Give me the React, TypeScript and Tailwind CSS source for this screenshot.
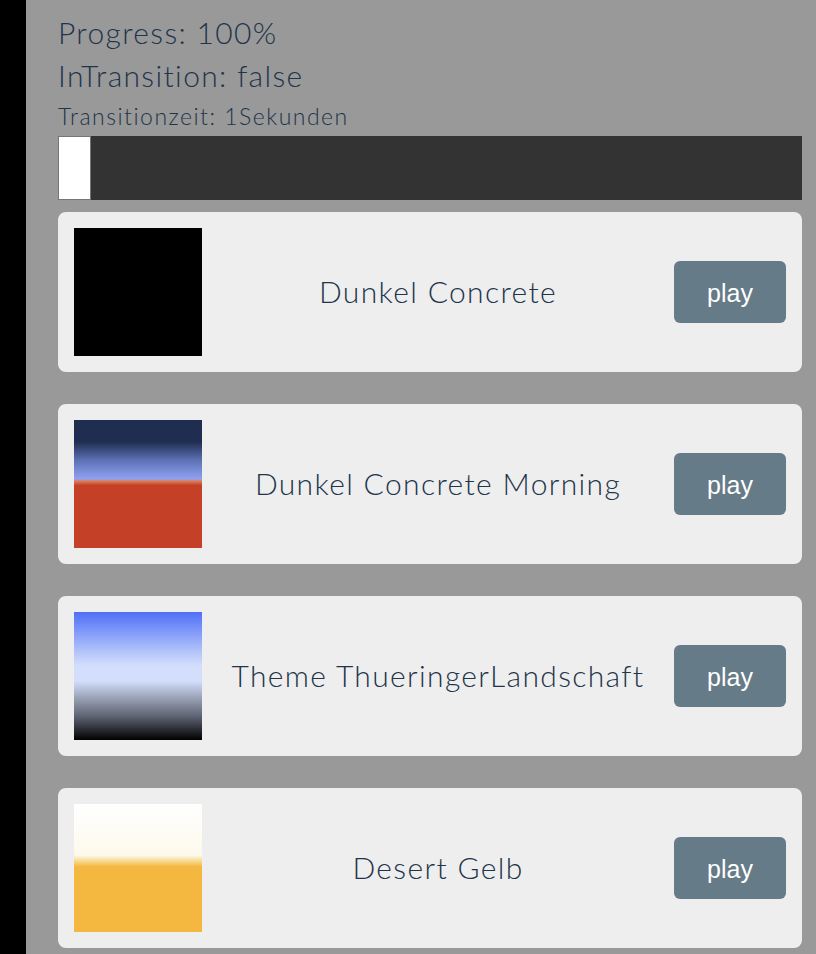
import React from "react"

const themes = [
  { name: "Dunkel Concrete", bg: "bg-black" },
  {
    name: "Dunkel Concrete Morning",
    bg: "bg-[linear-gradient(to_bottom,#1f2e50_0%,#1f2e50_17%,#5f73b8_32%,#8ea2f2_46%,#e0784e_48%,#c44128_51%,#c44128_100%)]",
  },
  {
    name: "Theme ThueringerLandschaft",
    bg: "bg-[linear-gradient(to_bottom,#506ff8_0%,#a9bcf9_28%,#d3defd_42%,#d3defd_54%,#9ea7bb_66%,#5c6170_82%,#24262c_93%,#000000_100%)]",
  },
  {
    name: "Desert Gelb",
    bg: "bg-[linear-gradient(to_bottom,#ffffff_0%,#fdf9ec_40%,#f8de9c_44%,#f4b73f_49%,#f4b73f_100%)]",
  },
]

function ThemeCard({ name, bg }: { name: string; bg: string }) {
  return (
    <div className="flex items-center h-[160px] rounded-lg bg-[#eeeeee] px-4 mb-8">
      <div className={`w-[128px] h-[128px] shrink-0 ${bg}`}></div>
      <div className="flex-1 text-center text-[30px] tracking-[0.045em] leading-none -mt-[2px] text-[#22344a]">{name}</div>
      <button className="w-[112px] h-[62px] rounded-md bg-[#657b88] text-white text-[25px] pt-[3px] font-['Liberation_Sans',Arial,sans-serif]">
        play
      </button>
    </div>
  )
}

export default function App() {
  return (
    <div className="flex min-h-[954px] bg-black font-['Lato',sans-serif] font-light">
      <div className="w-[26px] shrink-0"></div>
      <div className="flex-1 bg-[#999999] pl-8 pr-[14px] pt-3">
        <div className="text-[30px] tracking-[0.045em] leading-[43px] -mt-px text-[#22344a]">Progress: 100%</div>
        <div className="text-[30px] tracking-[0.045em] leading-[43px] text-[#22344a]">InTransition: false</div>
        <div className="text-[23px] tracking-[0.065em] leading-[39px] text-[#22344a]">Transitionzeit: 1Sekunden</div>
        <div className="h-16 bg-[#333333] mb-3">
          <div className="w-[33px] h-16 bg-white border border-[#6e7b6e]"></div>
        </div>
        {themes.map((t) => (
          <ThemeCard key={t.name} name={t.name} bg={t.bg} />
        ))}
      </div>
    </div>
  )
}
